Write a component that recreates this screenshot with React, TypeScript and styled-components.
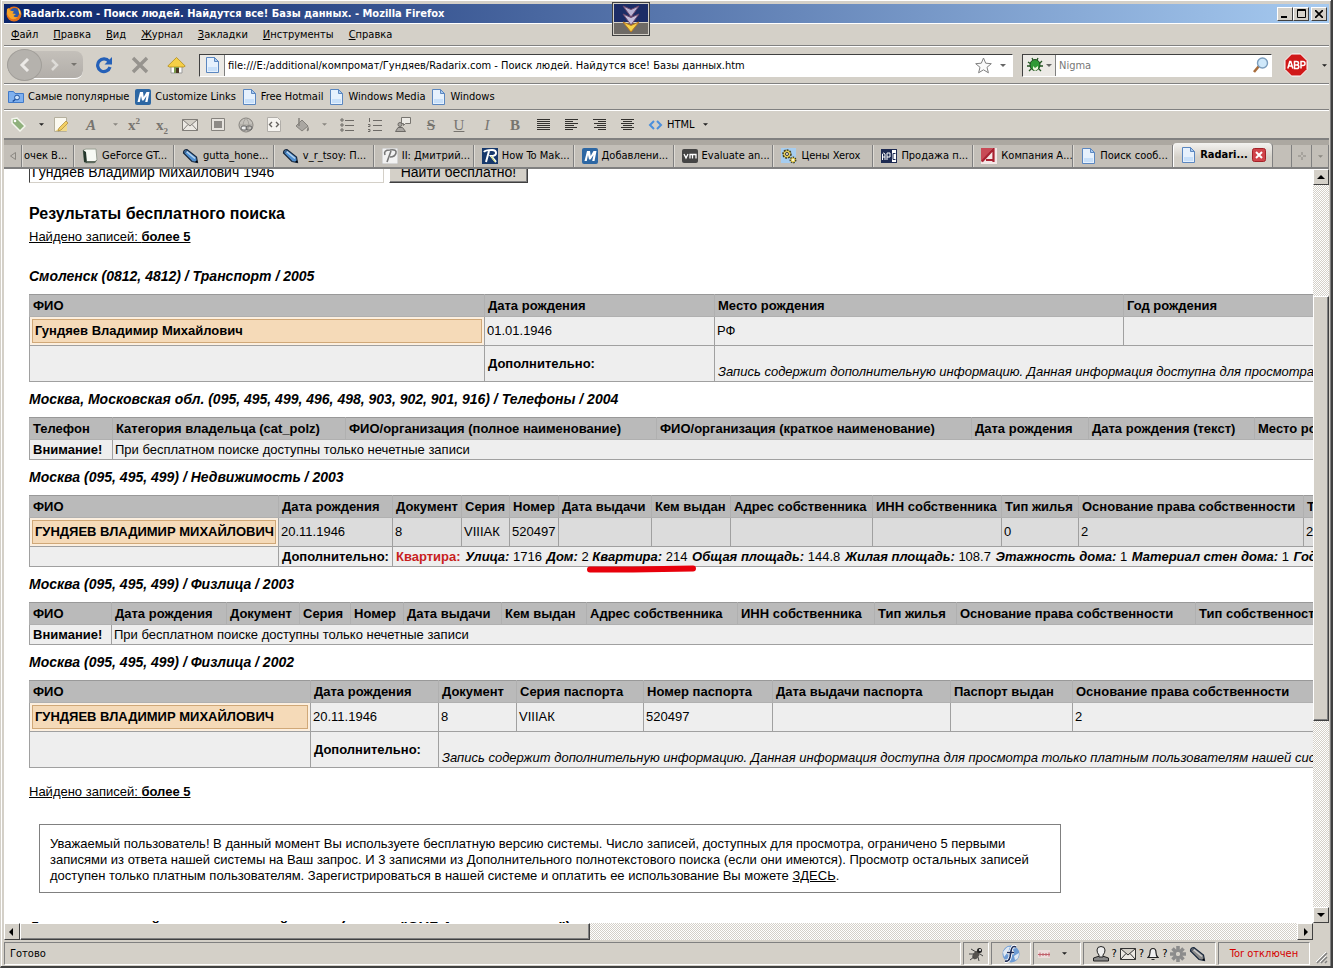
import React from "react";
import styled, { createGlobalStyle } from "styled-components";

const face = "#d4d0c8";
const dither = "repeating-conic-gradient(#d4d0c8 0 25%, #ffffff 0 50%) 0 0 / 2px 2px";
const uiFont = '"DejaVu Sans Condensed", "DejaVu Sans", sans-serif';

const GlobalStyle = createGlobalStyle`
  * { box-sizing: border-box; }
  body { margin: 0; overflow: hidden; background: ${face}; font-family: "Liberation Sans", Arial, sans-serif; font-size: 13px; color: #000; }
  button, input { font: inherit; color: inherit; margin: 0; border-radius: 0; }
  button { padding: 0; border: 0; background: none; }
  svg { display: block; flex: none; }
`;

const Window = styled.div`
  height: 100vh;
  display: flex;
  flex-direction: column;
  background: ${face};
  border-left: 1px solid #d4d0c8;
  border-right: 2px solid #404040;
  border-bottom: 2px solid #404040;
  padding: 4px 2px 0 3px;
  box-shadow: inset 1px 1px 0 #fff, inset -1px 0 0 #808080;
  font: 11px/16px ${uiFont};
`;

const TitleBar = styled.header`
  position: relative;
  flex: none;
  display: flex;
  align-items: center;
  height: 19px;
  padding: 0 2px;
  background: linear-gradient(90deg, #0a246a, #a6caf0);
  color: #fff;
`;
const Title = styled.h1`
  flex: 1;
  margin: 0 0 0 1px;
  font-size: 11px;
  font-weight: bold;
  white-space: nowrap;
`;
const WinButton = styled.button<{ $gap?: boolean }>`
  width: 16px;
  height: 14px;
  margin-left: ${(p) => (p.$gap ? 2 : 0)}px;
  background: ${face};
  border: 1px solid;
  border-color: #fff #404040 #404040 #fff;
  display: flex;
  align-items: center;
  justify-content: center;
`;
const DropBadge = styled.div`
  position: absolute;
  left: calc(46% - 2px);
  top: -2px;
  width: 38px;
  height: 34px;
  border: 1px solid #404040;
  outline: 1px solid #d4d0c8;
  outline-offset: -2px;
  background: linear-gradient(#1c2c66 0 58%, #d4d0c8 58% 62%, #6e6a66 62%);
  display: flex;
  justify-content: center;
  align-items: center;
  z-index: 2;
`;

const Bar = styled.div<{ $h: number; $gap?: number; $pad?: number }>`
  flex: none;
  display: flex;
  align-items: center;
  height: ${(p) => p.$h}px;
  gap: ${(p) => p.$gap ?? 0}px;
  padding: 0 ${(p) => p.$pad ?? 0}px;
  border-top: 1px solid #fff;
  border-bottom: 1px solid #808080;
  white-space: nowrap;
`;
const MenuItem = styled.button`
  &::first-letter { text-decoration: underline; }
`;

const NavCluster = styled.div`
  display: flex;
  align-items: center;
  width: 76px;
  height: 28px;
  margin: 0 12px 0 3px;
  border-radius: 14px 8px 8px 14px;
  background: linear-gradient(#c4c0ba, #b2aea9);
  border-bottom: 1px solid #fff;
`;
const RoundBack = styled.button`
  width: 35px;
  height: 32px;
  border-radius: 50%;
  border: 1px solid #a19e99;
  background: #b5b2ad;
  display: flex;
  align-items: center;
  justify-content: center;
`;
const IconButton = styled.button<{ $w?: number }>`
  flex: none;
  width: ${(p) => p.$w ?? 28}px;
  height: 24px;
  display: flex;
  align-items: center;
  justify-content: center;
  color: #77746f;
`;
const Field = styled.label<{ $grow?: boolean }>`
  display: flex;
  align-items: center;
  flex: ${(p) => (p.$grow ? "1 1 0" : "0 0 250px")};
  height: 23px;
  margin-left: ${(p) => (p.$grow ? 14 : 9)}px;
  background: #fff;
  border: 1px solid;
  border-color: #404040 #fff #fff #404040;
`;
const FieldIcon = styled.span<{ $w: number }>`
  flex: none;
  width: ${(p) => p.$w}px;
  height: 21px;
  display: flex;
  align-items: center;
  justify-content: center;
  gap: 3px;
  background: #eceae6;
  border-right: 1px solid #808080;
`;
const FieldInput = styled.input`
  flex: 1;
  min-width: 0;
  height: 18px;
  border: 0;
  outline: 0;
  padding: 0 3px;
  background: transparent;
  &::placeholder { color: #777; opacity: 1; }
`;

const Bookmark = styled.a`
  display: flex;
  align-items: center;
  gap: 4px;
  color: #000;
  text-decoration: none;
`;
const Glyph = styled.span<{ $italic?: boolean; $deco?: string; $bold?: boolean }>`
  font: ${(p) => (p.$italic ? "italic " : "")}${(p) => (p.$bold ? "bold " : "")}15px/18px "Liberation Serif", serif;
  text-decoration: ${(p) => p.$deco ?? "none"};
  sup, sub { font-size: 9px; line-height: 0; }
`;

const TabStrip = styled.nav`
  flex: none;
  display: flex;
  align-items: flex-end;
  height: 30px;
  padding-top: 3px;
  background: #aca8a1;
  border-top: 1px solid #808080;
  border-bottom: 2px solid #808080;
`;
const Tab = styled.button<{ $active?: boolean; $w?: number }>`
  flex: ${(p) => (p.$w ? `0 0 ${p.$w}px` : "1 1 0")};
  min-width: 0;
  height: ${(p) => (p.$active ? 24 : 22)}px;
  display: flex;
  align-items: center;
  gap: 4px;
  padding-left: ${(p) => (p.$w ? 1 : 7)}px;
  white-space: nowrap;
  background: ${(p) => (p.$active ? "linear-gradient(#f4f3f0, #d4d0c8 60%)" : "#c3bfb8")};
  border-radius: ${(p) => (p.$active ? "4px 4px 0 0" : "0")};
  border-left: 1px solid ${(p) => (p.$active ? "#fff" : "#dedbd5")};
  border-right: 1px solid #808080;
  font-weight: ${(p) => (p.$active ? "bold" : "normal")};
`;
const StripButton = styled.button<{ $w: number }>`
  flex: 0 0 ${(p) => p.$w}px;
  height: 22px;
  display: flex;
  align-items: center;
  justify-content: center;
  background: #c3bfb8;
  border-right: 1px solid #808080;
  color: #8a8781;
`;

const Viewport = styled.div`
  flex: 1;
  min-height: 0;
  display: grid;
  grid-template-columns: minmax(0, 1fr) 16px;
  grid-template-rows: minmax(0, 1fr) 17px;
`;
const Page = styled.main`
  overflow: hidden;
  background: #fff;
  padding-left: 25px;
  font: 13px/16px "Liberation Sans", Arial, sans-serif;
`;
const ScrollTrack = styled.div<{ $dir: "row" | "column" }>`
  display: flex;
  flex-direction: ${(p) => p.$dir};
  background: ${dither};
`;
const ScrollButton = styled.button`
  flex: 0 0 16px;
  min-height: 16px;
  background: ${face};
  border: 1px solid;
  border-color: #fff #404040 #404040 #fff;
  display: flex;
  align-items: center;
  justify-content: center;
`;
const Thumb = styled.div<{ $share: number }>`
  flex: ${(p) => p.$share} 1 0;
  background: ${face};
  border: 1px solid;
  border-color: #fff #404040 #404040 #fff;
  box-shadow: inset -1px -1px 0 #808080;
`;
const TrackGap = styled.div<{ $share: number }>`
  flex: ${(p) => p.$share} 1 0;
`;

const SearchForm = styled.form`
  display: flex;
  align-items: flex-end;
  gap: 5px;
  height: 14px;
  overflow: hidden;
`;
const SearchInput = styled.input`
  width: 355px;
  height: 22px;
  padding: 0 2px;
  border: 1px solid #d4d0c8;
  border-left-color: #404040;
  font-size: 14px;
`;
const SearchButton = styled.button`
  width: 139px;
  height: 22px;
  background: ${face};
  border: 1px solid;
  border-color: #fff #404040 #404040 #fff;
  box-shadow: inset -1px -1px 0 #808080;
  font-size: 14px;
`;
const ResultTitle = styled.h2`
  margin: 21px 0 5px;
  font-size: 16px;
  line-height: 20px;
`;
const Found = styled.p<{ $last?: boolean }>`
  margin: ${(p) => (p.$last ? "16px 0 24px" : "0")};
  line-height: 16px;
  text-decoration: underline;
`;
const GroupTitle = styled.h3`
  margin: 0;
  height: 35px;
  font-size: 14px;
  font-style: italic;
  line-height: 34px;
  white-space: nowrap;
  ${Found} + & { margin-top: 14px; }
`;
const Table = styled.table<{ $w: number }>`
  width: ${(p) => p.$w}px;
  table-layout: fixed;
  border-collapse: collapse;
  white-space: nowrap;
  line-height: 16px;
`;
const Th = styled.th`
  height: 22px;
  padding: 0 3px;
  text-align: left;
  background: #bababa;
  border: 1px solid #b0b0b0;
  border-top-color: #999;
`;
const Td = styled.td<{ $h?: number; $dark?: boolean; $low?: boolean; $hit?: boolean }>`
  height: ${(p) => p.$h ?? 20}px;
  padding: ${(p) => (p.$hit ? "2px" : p.$low ? "0 3px 1px" : "0 2px")};
  vertical-align: ${(p) => (p.$low ? "bottom" : "middle")};
  background: ${(p) => (p.$hit ? "#fcefdf" : p.$dark ? "#dcdcdc" : "#eee")};
  border: 1px solid #a0a0a0;
  & > b { padding-left: 1px; }
`;
const Hit = styled.div`
  height: 24px;
  padding: 0 2px;
  line-height: 22px;
  font-weight: bold;
  background: #f5dab8;
  border: 1px solid #d0a878;
`;
const Red = styled.b`
  color: #c81e1e;
`;
const Label = styled.b`
  font-style: italic;
`;
const Marked = styled.span`
  position: relative;
  svg { position: absolute; left: -6px; top: 16px; }
`;
const Notice = styled.p`
  max-width: 1022px;
  margin: 0 10px 25px;
  padding: 11px 10px 8px;
  border: 1px solid #808080;
  a { color: #000; }
`;
const NextTitle = styled.h2`
  margin: 0;
  font-size: 15px;
  line-height: 18px;
  white-space: nowrap;
`;

const StatusBar = styled.footer`
  flex: none;
  display: flex;
  gap: 2px;
  height: 26px;
  padding: 2px 0 1px;
`;
const StatusCell = styled.div<{ $w?: number; $red?: boolean }>`
  flex: ${(p) => (p.$w ? `0 0 ${p.$w}px` : "1 1 0")};
  display: flex;
  align-items: center;
  justify-content: ${(p) => (p.$w ? "center" : "flex-start")};
  gap: 3px;
  padding: 0 ${(p) => (p.$w ? 0 : 5)}px;
  border: 1px solid;
  border-color: #808080 #fff #fff #808080;
  color: ${(p) => (p.$red ? "#d40000" : "#000")};
  white-space: nowrap;
`;

const Caret = ({ c = "#222", s = 5 }: { c?: string; s?: number }) => (
  <svg width={s} height="3" viewBox="0 0 6 3"><path d="M0 0h6L3 3z" fill={c} /></svg>
);
const Arrow = ({ d }: { d: string }) => (
  <svg width="8" height="8" viewBox="0 0 8 8"><path d={d} fill="#000" /></svg>
);
const PageIcon = () => (
  <svg width="15" height="16" viewBox="0 0 15 16">
    <path d="M1.500 .5h8l4 4v11h-12z" fill="#e6f1fd" stroke="#5b87c0" />
    <path d="M3 10h9v4H3z" fill="#c8e0fa" />
    <path d="M9.500 .5v4h4z" fill="#a9cbf2" stroke="#5b87c0" />
  </svg>
);
const MIcon = () => (
  <svg width="16" height="16" viewBox="0 0 16 16">
    <rect width="16" height="16" rx="2" fill="#2d67a3" />
    <path d="M2.500 13 5 3h3l.7 5L11.500 3h3L12.500 13h-2.300L11.500 7 8.500 11.500H7L6 7 4.800 13z" fill="#fff" />
  </svg>
);
const FolderIcon = () => (
  <svg width="16" height="16" viewBox="0 0 16 16">
    <path d="M.5 2.500h5l1.500 2h8.500v9H.5z" fill="#7fb0ee" stroke="#4079c8" />
    <circle cx="9" cy="8.500" r="2.400" fill="#cfe4fb" stroke="#1d4f9c" /><path d="m7.200 10.500-2.500 2" stroke="#1d4f9c" strokeWidth="1.500" />
  </svg>
);
const PenIcon = ({ fill = "#4f8fd0", shine = "#b8d4ee" }: { fill?: string; shine?: string }) => (
  <svg width="17" height="16" viewBox="0 0 17 16">
    <path d="M1.500 5Q1.500 1.500 5 1.500L14.500 9 15.500 14.500 10 13.500z" fill={fill} stroke="#16263c" strokeWidth="1.200" />
    <path d="M4.500 3.500l8.500 7" stroke={shine} strokeWidth="1.600" /><path d="M5.500 2 2 5.500" stroke="#16263c" strokeWidth=".8" /><path d="m15.500 14.500-2.500-.4 2-1.800z" fill="#000" />
  </svg>
);
const FirefoxIcon = () => (
  <svg width="16" height="16" viewBox="0 0 16 16">
    <circle cx="8" cy="8" r="7.500" fill="#e2701c" /><circle cx="8.500" cy="6.800" r="4.800" fill="#2c58a8" />
    <path d="M1 3q-1 6 3 9t8-1q-3 1-4.500-1L10 8 6.500 7.500 8 5.500 4 4.500 3 2z" fill="#f6a428" /><path d="M12 2q3 3 2.500 7l-1.500-2z" fill="#ffd04a" />
  </svg>
);
const BookIcon = () => (
  <svg width="16" height="16" viewBox="0 0 16 16">
    <path d="M1 2l3-1h10l1 11-3 3H3z" fill="#f8faf4" stroke="#9aa094" /><path d="M1 2l3 2 1 11-3-1z" fill="#26382c" /><path d="M5 13h8l2-1-2 3H5z" fill="#5e6b5e" />
  </svg>
);
const PIcon = () => (
  <svg width="16" height="16" viewBox="0 0 16 16">
    <rect width="16" height="16" fill="#f2f2f2" stroke="#bbb" />
    <path d="M5 14 9 3M3 7q-2-5 5-5 7-1 6 3-1 4-6 4" fill="none" stroke="#777" strokeWidth="1.600" />
  </svg>
);
const RIcon = () => (
  <svg width="16" height="16" viewBox="0 0 16 16">
    <rect width="16" height="16" fill="#16386c" />
    <path d="M2 4q1-2 8-2 4 0 4 3t-5 3l5 6M7 3 4 14" fill="none" stroke="#fff" strokeWidth="2" /><path d="M9 8l4 6" stroke="#c5d860" />
  </svg>
);
const VmIcon = () => (
  <svg width="16" height="16" viewBox="0 0 16 16">
    <rect y="1" width="16" height="14" rx="2" fill="#444" />
    <path d="m2 6 2 4 2-4M8 10.500V6.500h2.500v4M10.500 6.500H14v4" fill="none" stroke="#fff" strokeWidth="1.300" />
  </svg>
);
const GearsIcon = () => (
  <svg width="16" height="16" viewBox="0 0 16 16">
    <rect width="15" height="15" fill="#a6cdf0" />
    <circle cx="6" cy="6" r="4" fill="#e7cf5a" stroke="#3d3a1c" strokeDasharray="2 1" strokeWidth="1.500" /><circle cx="6" cy="6" r="1.500" fill="#fff" stroke="#333" />
    <circle cx="12" cy="12" r="2.800" fill="#e7cf5a" stroke="#3d3a1c" strokeDasharray="1.500 1" strokeWidth="1.300" /><circle cx="12" cy="12" r="1" fill="#fff" />
  </svg>
);
const ApcIcon = () => (
  <svg width="16" height="16" viewBox="0 0 16 16">
    <rect y="1" width="16" height="14" fill="#1d2a52" /><path d="M11 2h4v12h-4z" fill="#fff" />
    <path d="M1.500 12V6q1-2 2.500 0v6M1.500 9H4M6 12V5h3v4H6" fill="none" stroke="#fff" /><path d="M14.500 5.500H12v6h2.500" fill="none" stroke="#1d2a52" />
  </svg>
);
const AIcon = () => (
  <svg width="16" height="16" viewBox="0 0 16 16">
    <rect width="16" height="16" fill="#c84a56" /><path d="M16 0v16H0v-2L12 0z" fill="#f4e6e6" />
    <path d="M1 13.500 12.500 1v13M5 12h7" fill="none" stroke="#a82030" strokeWidth="2.200" />
  </svg>
);
const CloseIcon = () => (
  <svg width="14" height="14" viewBox="0 0 14 14">
    <rect x=".5" y=".5" width="13" height="13" rx="2" fill="#d0444a" stroke="#a32228" /><path d="m4 4 6 6M10 4l-6 6" stroke="#fff" strokeWidth="2" />
  </svg>
);
const ListIcon = ({ n }: { n?: boolean }) => (
  <svg width="14" height="14" viewBox="0 0 14 14">
    <path d="M5 2.500h9M5 7.500h9M5 12.500h9" stroke="#6d6a66" />
    {n ? <path d="M1.500 0v4M0 6.500h2v2H0M0 11.500h2v2H0" stroke="#6d6a66" fill="none" /> : <path d="M1 1h2v2H1zM1 6h2v2H1zM1 11h2v2H1z" fill="none" stroke="#6d6a66" />}
  </svg>
);
const AlignIcon = ({ d }: { d: string }) => (
  <svg width="13" height="12" viewBox="0 0 13 12"><path d={d} stroke="#33312e" /></svg>
);
const MailIcon = ({ c = "#807d78" }: { c?: string }) => (
  <svg width="16" height="12" viewBox="0 0 16 12">
    <path d="M.5.5h15v11H.5zM.5.5 8 7 15.500.5M.5 11.500l5.500-6M15.500 11.500 10 5.500" fill="#ece9e4" stroke={c} />
  </svg>
);

const menus = ["Файл", "Правка", "Вид", "Журнал", "Закладки", "Инструменты", "Справка"];
const bookmarks: [string, React.ReactNode][] = [
  ["Самые популярные", <FolderIcon />],
  ["Customize Links", <MIcon />],
  ["Free Hotmail", <PageIcon />],
  ["Windows Media", <PageIcon />],
  ["Windows", <PageIcon />],
];
const tabs: [string, React.ReactNode][] = [
  ["GeForce GT...", <BookIcon />],
  ["gutta_hone...", <PenIcon />],
  ["v_r_tsoy: П...", <PenIcon />],
  ["II: Дмитрий...", <PIcon />],
  ["How To Mak...", <RIcon />],
  ["Добавлени...", <MIcon />],
  ["Evaluate an...", <VmIcon />],
  ["Цены Xerox", <GearsIcon />],
  ["Продажа п...", <ApcIcon />],
  ["Компания А...", <AIcon />],
  ["Поиск сооб...", <PageIcon />],
];

const tools: [string, number, React.ReactNode][] = [
  ["Метка", 28, <svg width="15" height="15" viewBox="0 0 15 15"><path d="M1 2l5-1 8 8-5 5-8-8z" fill="#8fb07c" stroke="#f4f6ee" strokeWidth="1.500" /><circle cx="4" cy="4" r="1.300" fill="#fff" /></svg>],
  ["Метки", 18, <Caret />],
  ["Заметка", 22, <svg width="15" height="15" viewBox="0 0 15 15"><path d="M.5.5h12v14H.5z" fill="#fbf9f0" stroke="#b5b09e" /><path d="M1 14 13 6v8z" fill="#f0d98c" /><path d="m5 11 7-7 2 2-7 7-3 1z" fill="#f3cf62" stroke="#a8873a" strokeWidth=".7" /></svg>],
  ["Цвет текста", 38, <Glyph $italic $bold>A</Glyph>],
  ["Цвета", 10, <Caret c="#8a8781" />],
  ["Надстрочный", 28, <Glyph $bold>x<sup>2</sup></Glyph>],
  ["Подстрочный", 28, <Glyph $bold>x<sub>2</sub></Glyph>],
  ["Письмо", 28, <MailIcon />],
  ["Картинка", 28, <svg width="14" height="13" viewBox="0 0 14 13"><path d="M.5.5h13v12H.5z" fill="#e6e3de" stroke="#85827d" /><path d="M3 3h8v7H3z" fill="#8d8a86" /></svg>],
  ["Ссылка", 28, <svg width="16" height="16" viewBox="0 0 16 16"><circle cx="8" cy="8" r="7" fill="#c4c1bb" stroke="#85827d" /><path d="M1 8h14M8 1q-6 7 0 14M8 1q6 7 0 14" fill="none" stroke="#a5a29d" /><rect x="3" y="9" width="6" height="4" rx="2" fill="#eee" stroke="#666" /><rect x="8" y="9" width="6" height="4" rx="2" fill="none" stroke="#666" /></svg>],
  ["Код", 28, <svg width="14" height="15" viewBox="0 0 14 15"><path d="M.5.5h10l3 3v11H.5z" fill="#f6f4f0" stroke="#b1aea9" /><path d="M5 5 2.500 7.500 5 10M9 5l2.500 2.500L9 10" fill="none" stroke="#66635f" strokeWidth="1.400" /></svg>],
  ["Заливка", 28, <svg width="16" height="16" viewBox="0 0 16 16"><path d="m2 9 6-6 6 6-6 5z" fill="#aaa7a2" stroke="#85827d" /><path d="M5 1v8" stroke="#85827d" strokeWidth="1.500" /><path d="M14 9q2 4 0 5t-1-2z" fill="#85827d" /></svg>],
  ["Заливки", 17, <Caret c="#8a8781" />],
  ["Список", 28, <ListIcon />],
  ["Нумерованный список", 28, <ListIcon n />],
  ["Цитата", 28, <svg width="16" height="16" viewBox="0 0 16 16"><path d="M6.500.5h9v6h-5l-2 2v-2h-2z" fill="#eceae5" stroke="#77746f" /><circle cx="5" cy="7.500" r="2" fill="#aaa7a2" stroke="#6d6a66" /><path d="M.5 14.500 3 10.500h4.500l3 4z" fill="#aaa7a2" stroke="#6d6a66" /></svg>],
  ["Зачёркнутый", 28, <Glyph $bold $deco="line-through">S</Glyph>],
  ["Подчёркнутый", 28, <Glyph $deco="underline">U</Glyph>],
  ["Курсив", 28, <Glyph $italic>I</Glyph>],
  ["Жирный", 28, <Glyph $bold>B</Glyph>],
  ["По ширине", 28, <AlignIcon d="M0 .5h13M0 2.500h13M0 4.500h13M0 6.500h13M0 8.500h13M0 10.500h13" />],
  ["По левому краю", 28, <AlignIcon d="M0 .5h13M0 2.500h8M0 4.500h13M0 6.500h9M0 8.500h12M0 10.500h8" />],
  ["По правому краю", 28, <AlignIcon d="M0 .5h13M5 2.500h8M1 4.500h12M4 6.500h9M1 8.500h12M5 10.500h8" />],
  ["По центру", 28, <AlignIcon d="M0 .5h13M2 2.500h9M0 4.500h13M2 6.500h9M0 8.500h13M2 10.500h9" />],
];

type GridProps = { cols: number[]; heads: string[]; children: React.ReactNode };
const Grid = ({ cols, heads, children }: GridProps) => (
  <Table $w={cols.reduce((a, b) => a + b, 0)}>
    <colgroup>{cols.map((w, i) => <col key={i} width={w} />)}</colgroup>
    <thead><tr>{heads.map((h) => <Th key={h}>{h}</Th>)}</tr></thead>
    <tbody>{children}</tbody>
  </Table>
);
const OddOnly = ({ span }: { span: number }) => (
  <tr><Td><b>Внимание!</b></Td><Td colSpan={span}>При бесплатном поиске доступны только нечетные записи</Td></tr>
);
const DataRow = ({ name, cells, dark }: { name: string; cells: string[]; dark?: boolean }) => (
  <tr>
    <Td $h={28} $hit><Hit>{name}</Hit></Td>
    {cells.map((c, i) => <Td key={i} $h={28} $dark={dark}>{c}</Td>)}
  </tr>
);
const PaidRow = ({ span }: { span: number }) => (
  <tr>
    <Td $h={36} />
    <Td $h={36}><b>Дополнительно:</b></Td>
    <Td $h={36} $low colSpan={span}><i>Запись содержит дополнительную информацию. Данная информация доступна для просмотра только платным пользователям нашей системы.</i></Td>
  </tr>
);

const estateHeads = ["ФИО", "Дата рождения", "Документ", "Серия", "Номер", "Дата выдачи", "Кем выдан", "Адрес собственника", "ИНН собственника", "Тип жилья", "Основание права собственности", "Тип собственности"];

export default function App() {
  return (
    <Window>
      <GlobalStyle />
      <TitleBar>
        <FirefoxIcon />
        <Title>Radarix.com - Поиск людей. Найдутся все! Базы данных. - Mozilla Firefox</Title>
        <WinButton aria-label="Свернуть"><Arrow d="M0 6h6v2H0z" /></WinButton>
        <WinButton aria-label="Развернуть"><svg width="9" height="9" viewBox="0 0 9 9"><path d="M.5.5h8v8h-8zM0 1.500h9" fill="none" stroke="#000" /></svg></WinButton>
        <WinButton aria-label="Закрыть" $gap><svg width="8" height="8" viewBox="0 0 8 8"><path d="m0 0 8 8M8 0 0 8" stroke="#000" strokeWidth="1.700" /></svg></WinButton>
        <DropBadge>
          <svg width="18" height="28" viewBox="0 0 18 28">
            <path d="m1 1 8 3.500L17 1 9 12z" fill="#b9b3d4" stroke="#70486c" /><path d="m1 9 8 3.500L17 9 9 20z" fill="#c5bfdc" stroke="#70486c" /><path d="m1 17 8 3.500 8-3.500-8 10z" fill="#f5d24a" stroke="#b87822" />
          </svg>
        </DropBadge>
      </TitleBar>
      <Bar as="nav" $h={23} $gap={15} $pad={7}>
        {menus.map((m) => <MenuItem key={m}>{m}</MenuItem>)}
      </Bar>
      <Bar $h={38}>
        <NavCluster>
          <RoundBack aria-label="Назад"><svg width="11" height="14" viewBox="0 0 11 14"><path d="M9 1 3 7l6 6" fill="none" stroke="#eceae7" strokeWidth="3" /></svg></RoundBack>
          <IconButton $w={24} aria-label="Вперёд"><svg width="9" height="12" viewBox="0 0 9 12"><path d="m2 1 5 5-5 5" fill="none" stroke="#dedcd8" strokeWidth="2.500" /></svg></IconButton>
          <IconButton $w={16} aria-label="История"><Caret c="#77746f" s={6} /></IconButton>
        </NavCluster>
        <IconButton $w={18} aria-label="Обновить"><svg width="18" height="18" viewBox="0 0 18 18"><path d="M14 5.500A6.300 6.300 0 1 0 15 11" fill="none" stroke="#2460b8" strokeWidth="3.200" /><path d="M17 1v7.500H9.500z" fill="#2460b8" /></svg></IconButton>
        <IconButton $w={54} aria-label="Остановить"><svg width="18" height="18" viewBox="0 0 18 18"><path d="m2 2 14 14M16 2 2 16" stroke="#96938e" strokeWidth="3.400" /></svg></IconButton>
        <IconButton $w={18} aria-label="Домой"><svg width="19" height="18" viewBox="0 0 19 18"><path d="M4 9h11v8H4z" fill="#fdfdfd" stroke="#9a9a9a" /><path d="M.8 10 9.500 1.500 18.200 10l-1.500 1H2.300z" fill="#f6cf46" stroke="#b08b1c" strokeWidth=".8" /><path d="M7 11h5v6H7z" fill="#7a9c4c" /><path d="M9 12h3v5H9z" fill="#4a3624" /></svg></IconButton>
        <Field $grow>
          <FieldIcon $w={25}><PageIcon /></FieldIcon>
          <FieldInput aria-label="Адрес" defaultValue="file:///E:/additional/компромат/Гундяев/Radarix.com - Поиск людей. Найдутся все! Базы данных.htm" />
          <IconButton $w={22} aria-label="В закладки"><svg width="17" height="17" viewBox="0 0 17 17"><path d="m8.500 1 2.200 5.200 5.600.5-4.300 3.600 1.400 5.500-4.900-3-4.900 3L5 10.300.7 6.700l5.600-.5z" fill="#fafafa" stroke="#808080" /></svg></IconButton>
          <IconButton $w={18} aria-label="Адреса"><Caret c="#666" s={6} /></IconButton>
        </Field>
        <Field>
          <FieldIcon $w={33}>
            <svg width="16" height="16" viewBox="0 0 16 16"><path d="M1 5l3 2M0 9h4M2 14l3-3M15 4l-3 3M16 9h-4M14 14l-3-3M6 3 5 1M10 3l1-2" stroke="#225522" strokeWidth="1.300" /><ellipse cx="8" cy="8" rx="5" ry="5.500" fill="#2f9a35" stroke="#1c4a1c" /><path d="m6 9 2 2 3-2v3l-3 2-2-2z" fill="#eaf5d8" /></svg>
            <Caret c="#666" s={6} />
          </FieldIcon>
          <FieldInput aria-label="Поиск" placeholder="Nigma" />
          <IconButton $w={22} aria-label="Найти"><svg width="17" height="17" viewBox="0 0 17 17"><path d="m2 15 5-6" stroke="#a86c3a" strokeWidth="2.600" /><circle cx="10.500" cy="6" r="5" fill="#cfe8fa" stroke="#7b9dbd" strokeWidth="1.400" /></svg></IconButton>
        </Field>
        <IconButton $w={47} aria-label="Adblock Plus">
          <svg width="24" height="24" viewBox="0 0 24 24"><path d="M7.500 1h9L23 7.500v9L16.500 23h-9L1 16.500v-9z" fill="#d01818" stroke="#fff" /><path d="m3.800 15.500 2-7h1l2 7M4.500 13h3.600M10.500 15.500v-7h2q2 0 2 1.700t-2 1.700h-2 2.300q2 0 2 1.800t-2 1.800zM17 15.500v-7h2q2 0 2 2t-2 2h-2" fill="none" stroke="#fff" strokeWidth="1.500" /></svg>
        </IconButton>
        <IconButton $w={10} aria-label="Ещё"><Caret /></IconButton>
      </Bar>
      <Bar as="nav" $h={26} $gap={6} $pad={4}>
        {bookmarks.map(([t, icon]) => <Bookmark key={t} href="#">{icon}{t}</Bookmark>)}
      </Bar>
      <Bar $h={29}>
        {tools.map(([t, w, icon]) => <IconButton key={t} $w={w} aria-label={t}>{icon}</IconButton>)}
        <Bookmark as="button">
          <svg width="22" height="10" viewBox="-8 0 22 10"><path d="M5 1 1 5l4 4M8 1l4 4-4 4" fill="none" stroke="#4a8fdc" strokeWidth="2" /></svg>
          HTML
          <IconButton as="span" $w={14}><Caret /></IconButton>
        </Bookmark>
      </Bar>
      <TabStrip>
        <StripButton $w={18} aria-label="Вкладки влево"><svg width="6" height="8" viewBox="0 0 6 8"><path d="M5.500.5v7l-5-3.500z" fill="none" stroke="#8a8781" /></svg></StripButton>
        <Tab $w={52}>очек В...</Tab>
        {tabs.map(([t, icon]) => <Tab key={t}>{icon}{t}</Tab>)}
        <Tab $active><PageIcon />Radari...<CloseIcon /></Tab>
        <StripButton $w={19} aria-label="Вкладки вправо" />
        <StripButton $w={20} aria-label="Новая вкладка"><svg width="8" height="8" viewBox="0 0 8 8"><path d="M4 0v8M0 4h8" stroke="#8a8781" strokeDasharray="3 2" /></svg></StripButton>
        <StripButton $w={17} aria-label="Все вкладки"><Caret c="#8a8781" /></StripButton>
      </TabStrip>
      <Viewport>
        <Page>
          <SearchForm>
            <SearchInput aria-label="Запрос" defaultValue="Гундяев Владимир Михайлович 1946" />
            <SearchButton type="button">Найти бесплатно!</SearchButton>
          </SearchForm>
          <ResultTitle>Результаты бесплатного поиска</ResultTitle>
          <Found>Найдено записей: <b>более 5</b></Found>

          <GroupTitle>Смоленск (0812, 4812) / Транспорт / 2005</GroupTitle>
          <Grid cols={[455, 230, 409, 400]} heads={["ФИО", "Дата рождения", "Место рождения", "Год рождения"]}>
            <DataRow name="Гундяев Владимир Михайлович" cells={["01.01.1946", "РФ", ""]} />
            <PaidRow span={2} />
          </Grid>

          <GroupTitle>Москва, Московская обл. (095, 495, 499, 496, 498, 903, 902, 901, 916) / Телефоны / 2004</GroupTitle>
          <Grid cols={[83, 233, 311, 315, 117, 166, 200]} heads={["Телефон", "Категория владельца (cat_polz)", "ФИО/организация (полное наименование)", "ФИО/организация (краткое наименование)", "Дата рождения", "Дата рождения (текст)", "Место рождения"]}>
            <OddOnly span={6} />
          </Grid>

          <GroupTitle>Москва (095, 495, 499) / Недвижимость / 2003</GroupTitle>
          <Grid cols={[249, 114, 69, 48, 49, 93, 79, 142, 129, 77, 225, 150]} heads={estateHeads}>
            <DataRow dark name="ГУНДЯЕВ ВЛАДИМИР МИХАЙЛОВИЧ" cells={["20.11.1946", "8", "VIIIАК", "520497", "", "", "", "", "0", "2", "2"]} />
            <tr>
              <Td />
              <Td><b>Дополнительно:</b></Td>
              <Td colSpan={10}>
                <Red>Квартира:</Red> <Label>Улица:</Label> 1716 <Label>Дом:</Label> 2{" "}
                <Marked>
                  <Label>Квартира:</Label> 214
                  <svg width="110" height="8" viewBox="0 0 110 8"><path d="M4 4.500h43L107 3.500" fill="none" stroke="#e8000b" strokeWidth="6" strokeLinecap="round" /></svg>
                </Marked>{" "}
                <Label>Общая площадь:</Label> 144.8 <Label>Жилая площадь:</Label> 108.7 <Label>Этажность дома:</Label> 1 <Label>Материал стен дома:</Label> 1 <Label>Год постройки:</Label>
              </Td>
            </tr>
          </Grid>

          <GroupTitle>Москва (095, 495, 499) / Физлица / 2003</GroupTitle>
          <Grid cols={[82, 115, 73, 51, 53, 98, 85, 151, 137, 82, 239, 180]} heads={estateHeads}>
            <OddOnly span={11} />
          </Grid>

          <GroupTitle>Москва (095, 495, 499) / Физлица / 2002</GroupTitle>
          <Grid cols={[281, 128, 78, 127, 129, 178, 122, 320]} heads={["ФИО", "Дата рождения", "Документ", "Серия паспорта", "Номер паспорта", "Дата выдачи паспорта", "Паспорт выдан", "Основание права собственности"]}>
            <DataRow name="ГУНДЯЕВ ВЛАДИМИР МИХАЙЛОВИЧ" cells={["20.11.1946", "8", "VIIIАК", "520497", "", "", "2"]} />
            <PaidRow span={6} />
          </Grid>

          <Found $last>Найдено записей: <b>более 5</b></Found>
          <Notice>
            Уважаемый пользователь! В данный момент Вы используете бесплатную версию системы. Число записей, доступных для просмотра, ограничено 5 первыми<br />
            записями из ответа нашей системы на Ваш запрос. И 3 записями из Дополнительного полнотекстового поиска (если они имеются). Просмотр остальных записей<br />
            доступен только платным пользователям. Зарегистрироваться в нашей системе и оплатить ее использование Вы можете <a href="#">ЗДЕСЬ</a>.
          </Notice>
          <NextTitle>Дополнительный полнотекстовый поиск (запрос "СНГ Адресная книга")</NextTitle>
        </Page>
        <ScrollTrack $dir="column">
          <ScrollButton aria-label="Вверх"><Arrow d="M0 6h8L4 2z" /></ScrollButton>
          <TrackGap $share={111} /><Thumb $share={425} /><TrackGap $share={187} />
          <ScrollButton aria-label="Вниз"><Arrow d="M0 2h8L4 6z" /></ScrollButton>
        </ScrollTrack>
        <ScrollTrack $dir="row">
          <ScrollButton aria-label="Влево"><Arrow d="M5 0v8L1 4z" /></ScrollButton>
          <Thumb $share={569} /><TrackGap $share={708} />
          <ScrollButton aria-label="Вправо"><Arrow d="M3 0v8l4-4z" /></ScrollButton>
        </ScrollTrack>
      </Viewport>
      <StatusBar>
        <StatusCell>Готово</StatusCell>
        <StatusCell $w={26}><svg width="16" height="16" viewBox="0 0 16 16"><ellipse cx="8" cy="9" rx="3" ry="4.500" transform="rotate(35 8 9)" fill="#55524e" /><circle cx="11.500" cy="4.500" r="2.500" fill="#222" /><path d="M8 6 3 3M6 8H1M6 11l-4 3M10 11l1 4M12 8l3 2" stroke="#444" /><circle cx="12" cy="4" r="1" fill="#fff" /></svg></StatusCell>
        <StatusCell $w={40}><svg width="22" height="20" viewBox="0 0 22 20"><circle cx="11" cy="10" r="8.500" fill="#6d9bd4" /><path d="M3 8q4-6 7-5L8 8l-4 5zM14 12l5-3q0 6-4 7z" fill="#dfe8f2" /><path d="M16 3q-4-2-5 4l-1 6q-1 5-5 4M7 8.500h7" fill="none" stroke="#fff" strokeWidth="3.500" /><path d="M16 3q-4-2-5 4l-1 6q-1 5-5 4M7 8.500h7" fill="none" stroke="#1c2c58" strokeWidth="1.600" /></svg></StatusCell>
        <StatusCell $w={48}><svg width="12" height="8" viewBox="0 0 12 8"><path d="M0 0h12v8H0z" fill="#ecdcdc" /><path d="M0 4.500h12M2 2.500v4M5 3v3M8 3v3M11 2.500v4" stroke="#c0606c" /></svg><IconButton $w={24} aria-label="Режим"><Caret /></IconButton></StatusCell>
        <StatusCell $w={133}>
          <svg width="16" height="16" viewBox="0 0 16 16"><path d="M.5 15v-3l4.500-1.500h6l4.500 1.500v3z" fill="#888" stroke="#222" /><path d="M6 11V9Q4 7 4 4q0-3.500 4-3.500T12 4q0 3-2 5v2z" fill="#eee" stroke="#222" /></svg>?
          <MailIcon c="#333" />?
          <svg width="12" height="14" viewBox="0 0 12 14"><path d="M1 10.500q2-1.500 2-5 0-4 3-4t3 4q0 3.500 2 5zM4.500 12.500h3" fill="#eee" stroke="#222" strokeWidth="1.200" /></svg>?
          <svg width="16" height="16" viewBox="0 0 16 16"><g stroke="#8c8c8c" strokeWidth="3.600"><path d="M8 0v6M8 10v6M0 8h6M10 8h6M2.500 2.500l4 4M9.500 9.500l4 4M13.500 2.500l-4 4M6.500 9.500l-4 4" /></g></svg>
          <PenIcon fill="#888" shine="#ccc" />
        </StatusCell>
        <StatusCell $w={92} $red>Tor отключен</StatusCell>
        <svg width="17" height="23" viewBox="0 0 17 23"><path d="M5 21 15 11M9 21l6-6M13 21l2-2" stroke="#808080" strokeWidth="1.500" /><path d="M4 20 14 10M8 20l6-6" stroke="#fff" /></svg>
      </StatusBar>
    </Window>
  );
}
